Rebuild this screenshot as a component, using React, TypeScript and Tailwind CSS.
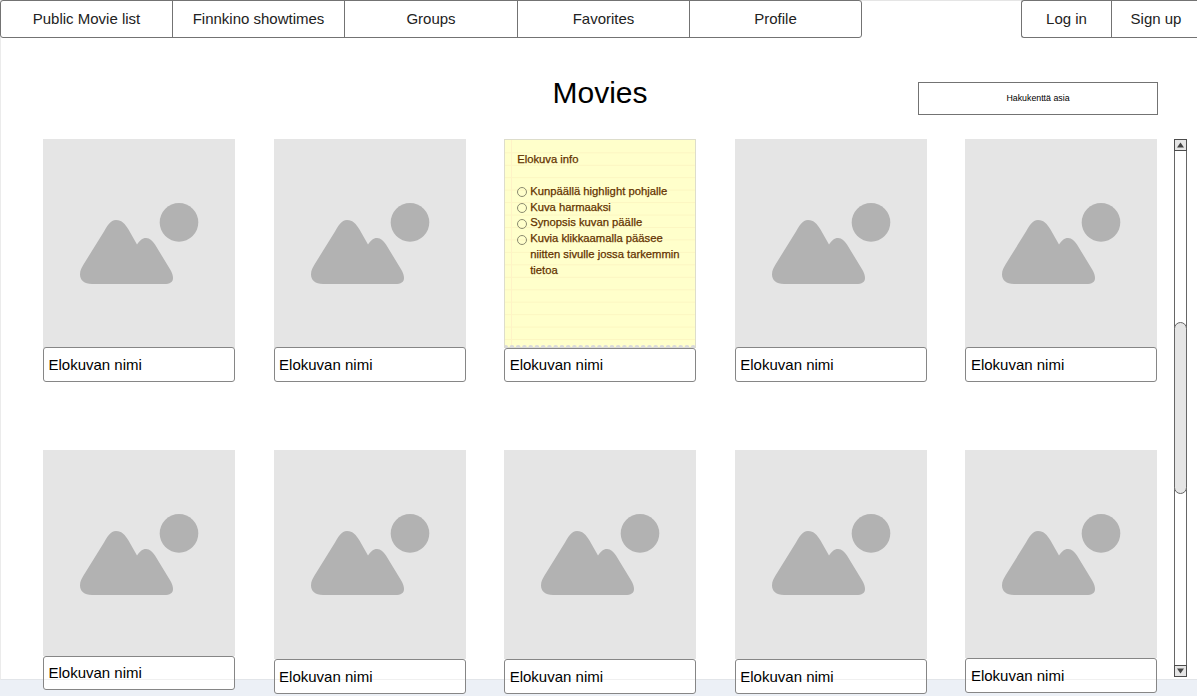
import React from "react";

const tabs = ["Public Movie list", "Finnkino showtimes", "Groups", "Favorites", "Profile"];

function Picture({ height }: { height: string }) {
  return (
    <div className={`w-full bg-[#e5e5e5] ${height}`}>
      <svg width="192" height="209" viewBox="0 0 192 209" fill="#b2b2b2">
        <circle cx="136" cy="83.4" r="19.3" />
        <path d="M61 92.500C64 87 67.500 81 73 81C79 81 82 85 85.500 90.500L94 105.500C97 101.500 99 99 103 99C107 99 109.500 102 112 105.500L127.500 131C129 134 130 136 130 139C130 143 127 145 121 145H49C41 145 37 141 37 135.500C37 131 38.500 129 40.500 125.500Z" />
      </svg>
    </div>
  );
}

const notes = [
  "Kunpäällä highlight pohjalle",
  "Kuva harmaaksi",
  "Synopsis kuvan päälle",
  "Kuvia klikkaamalla pääsee niitten sivulle jossa tarkemmin tietoa",
];

function Note() {
  return (
    <div className="relative h-[209px] w-full border border-[#ddddcb] bg-[#ffffcb] pl-3 pt-3 text-[11.25px] leading-[15.8px] text-[#633200] [-webkit-text-stroke:0.25px_#633200]">
      <svg className="absolute left-0 top-0" width="190" height="208" viewBox="0 0 190 208">
        {Array.from({ length: 16 }, (_, i) => (
          <path key={i} d={`M0 ${(12.8 + i * 12.45).toFixed(1)}H190`} stroke="#fcf6c2" />
        ))}
        <path d="M6.500 0V206" stroke="#fff2c6" />
        {Array.from({ length: 31 }, (_, i) => (
          <circle key={i} cx={i * 6.25 + 0.7} cy="207.5" r="2.400" fill="#d9d9d9" />
        ))}
      </svg>
      <div className="relative">
        <p className="mb-4">Elokuva info</p>
        <ul>
          {notes.map((n) => (
            <li key={n} className="flex">
              <span className="mr-[3px] mt-[3.500px] size-[10px] shrink-0 rounded-full border border-[#8b8b70]" />
              <span className="w-[154px]">{n}</span>
            </li>
          ))}
        </ul>
      </div>
    </div>
  );
}

function Label({ line, height = "h-[35px]" }: { line?: string; height?: string }) {
  return (
    <div className={`relative flex w-full items-center rounded-[3px] border border-[#868686] bg-white pl-[4.500px] text-[15px] leading-[18px] text-black ${height}`}>
      {line && <span className={`absolute inset-x-0 h-px bg-[#f0f0f0] ${line}`} />}
      <span className="relative">Elokuvan nimi</span>
    </div>
  );
}

const lower = [
  { height: "h-[206px]", line: "top-[22px]", label: "h-[34px]" },
  { height: "h-[209px]", line: "top-[19px]", label: "h-[35px]" },
  { height: "h-[209px]", line: "top-[19px]", label: "h-[35px]" },
  { height: "h-[209px]", line: "top-[19px]", label: "h-[35px]" },
  { height: "h-[208px]", line: "top-[20px]", label: "h-[35px]" },
];

function Arrow({ down }: { down?: boolean }) {
  return (
    <div className="flex h-[12px] w-[13px] shrink-0 items-center justify-center border border-[#4c4c4c] bg-[#e5e5e5]">
      <svg width="7" height="6" viewBox="0 0 7 6" fill="#444">
        <path d={down ? "M0 .5H7L3.500 5.500Z" : "M0 5.500H7L3.500 .5Z"} />
      </svg>
    </div>
  );
}

export default function App() {
  return (
    <div className="h-[696px] w-[1197px] overflow-hidden bg-[#ecf0f6] font-['Liberation_Sans',Arial,sans-serif] text-black">
      <main className="flex h-[680px] flex-col border-b border-l border-t border-b-[#e2e5e9] border-l-[#ebebeb] border-t-[#e5e5e5] bg-white">
        <header className="-ml-px -mt-px flex h-[38px] shrink-0 justify-between text-[15px] text-[#222]">
          <nav className="grid w-[862px] grid-cols-[172px_172px_173px_172px_1fr] rounded-[3px] border border-[#737373]">
            {tabs.map((t, i) => (
              <button key={t} className={`flex items-center justify-center ${i < 4 ? "border-r border-[#737373]" : ""}`}>
                {t}
              </button>
            ))}
          </nav>
          <div className="flex w-[176px] rounded-l-[3px] border-y border-l border-[#737373]">
            <button className="w-[90px] shrink-0 border-r border-[#737373]">Log in</button>
            <button className="w-[88px] shrink-0">Sign up</button>
          </div>
        </header>
        <div className="grid h-[101px] shrink-0 grid-cols-[1fr_240px] pr-[39px]">
          <h1 className="pl-[551.500px] pt-[37px] text-[30px] leading-[36px]">Movies</h1>
          <div className="mt-[44px] flex h-[33px] items-center justify-center border border-[#737373] pt-px text-[8.800px]">
            Hakukenttä asia
          </div>
        </div>
        <div className="flex justify-between pl-[42px] pr-[10px]">
          <section className="grid shrink-0 grid-cols-[repeat(5,192px)] gap-x-[38.600px]">
            {[0, 1, 2, 3, 4].map((i) => (
              <article key={i} className="h-[311px]">
                {i === 2 ? <Note /> : <Picture height="h-[209px]" />}
                <div className={i === 2 ? "" : "-mt-px"}>
                  <Label height={i === 2 ? "h-[34px]" : "h-[35px]"} />
                </div>
              </article>
            ))}
            {lower.map((c, i) => (
              <article key={i}>
                <div className="overflow-hidden">
                  <Picture height={c.height} />
                </div>
                <Label line={c.line} height={c.label} />
              </article>
            ))}
          </section>
          <aside className="flex h-[538px] w-[13px] shrink-0 flex-col">
            <Arrow />
            <div className="w-full flex-1 border-x border-[#666] pt-[171px]">
              <div className="-mx-px h-[172px] rounded-full border border-[#666] bg-[#e5e5e5]" />
            </div>
            <Arrow down />
          </aside>
        </div>
      </main>
    </div>
  );
}
